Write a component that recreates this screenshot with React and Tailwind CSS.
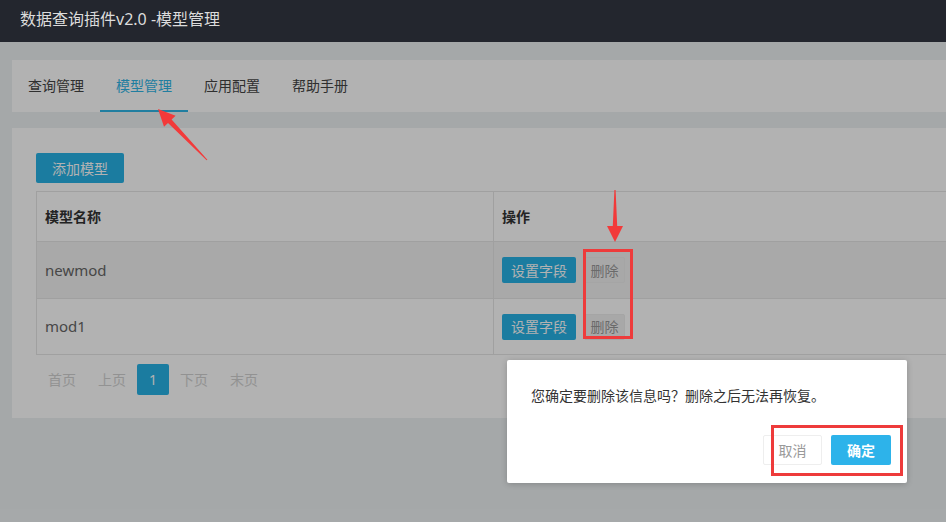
import React from "react";

const tabs = ["查询管理", "模型管理", "应用配置", "帮助手册"];
const rows = ["newmod", "mod1"];

export default function App() {
  return (
    <div className="relative w-[946px] h-[522px] overflow-hidden flex flex-col font-['Noto_Sans','Noto_Sans_CJK_SC',sans-serif] text-[14px]">
      {/* Header */}
      <div className="h-[42px] shrink-0 bg-[#23262e] flex items-center px-5 pb-[4px]">
        <span className="text-[16px] text-[#dcdcdc]">数据查询插件v2.0 -模型管理</span>
      </div>

      {/* Content */}
      <div className="relative flex-1 bg-[#edf1f3] pt-[18px] pl-[12px]">
        {/* Tabs panel */}
        <div className="w-[960px] h-[52px] bg-white flex">
          {tabs.map((t, i) => (
            <div
              key={t}
              className={
                i === 1
                  ? "px-4 h-full flex items-center border-b-2 border-[#2fb5e6] text-[#2fb5e6] pt-[1px]"
                  : "px-4 h-full flex items-center text-[#444] border-b-2 border-transparent pt-[1px]"
              }
            >
              {t}
            </div>
          ))}
        </div>

        {/* Main panel */}
        <div className="mt-[16px] w-[960px] h-[290px] bg-white pl-[24px] pt-[25px]">
          <button className="w-[88px] h-[30px] bg-[#28b2e6] text-white rounded-[2px] text-[14px]">
            添加模型
          </button>
          <div className="mt-[8px] w-[940px] border border-[#e6e6e6]">
            <div className="flex h-[50px] border-b border-[#e6e6e6] items-center">
              <div className="w-[457px] h-full border-r border-[#e6e6e6] flex items-center pl-[8px] font-bold text-[#333]">
                模型名称
              </div>
              <div className="flex-1 pl-[8px] font-bold text-[#333]">操作</div>
            </div>
            {rows.map((r, i) => (
              <div
                key={r}
                className={
                  i === 0
                    ? "flex h-[57px] border-b border-[#e6e6e6] bg-[#f3f3f3]"
                    : "flex h-[55px]"
                }
              >
                <div className="w-[457px] h-full border-r border-[#e6e6e6] flex items-center pl-[8px] text-[15px] text-[#666]">
                  {r}
                </div>
                <div className="flex-1 flex items-center pl-[8px] gap-[8px]">
                  <button className="h-[26px] w-[74px] bg-[#28b2e6] text-white text-[14px] rounded-[2px]">
                    设置字段
                  </button>
                  <button className="h-[26px] w-[41px] bg-[#f1f1f1] border border-[#ececec] text-[#999] text-[14px] rounded-[2px]">
                    删除
                  </button>
                </div>
              </div>
            ))}
          </div>
          {/* Pagination */}
          <div className="mt-[9px] ml-px flex items-center h-[31px] text-[14px] text-[#d2d2d2]">
            <span className="px-[11px]">首页</span>
            <span className="px-[11px]">上页</span>
            <span className="w-[32px] h-[31px] bg-[#28b2e6] text-white rounded-[2px] flex items-center justify-center">1</span>
            <span className="px-[11px]">下页</span>
            <span className="px-[11px]">末页</span>
          </div>
        </div>

        {/* Shade */}
        <div className="absolute inset-0 bg-black/30"></div>
      </div>

      {/* Dialog */}
      <div className="absolute left-[507px] top-[360px] w-[400px] h-[123px] bg-white rounded-[2px] shadow-[0_1px_6px_rgba(0,0,0,0.2)] flex flex-col">
        <div className="pl-[24px] pt-[26px] text-[14px] leading-[20px] text-[#333]">
          您确定要删除该信息吗？删除之后无法再恢复。
        </div>
        <div className="mt-auto mb-[18px] mr-[16px] flex justify-end gap-[9px]">
          <button className="w-[59px] h-[30px] border border-[#eeeeee] text-[#999] rounded-[2px] text-[14px] bg-white">
            取消
          </button>
          <button className="w-[60px] h-[30px] bg-[#2db3ea] text-white rounded-[2px] text-[14px] font-semibold">
            确定
          </button>
        </div>
      </div>

      {/* Annotations */}
      <div className="absolute left-[583px] top-[249px] w-[50px] h-[90px] border-[3px] border-[#ee3b3b]"></div>
      <div className="absolute left-[771px] top-[425px] w-[132px] h-[51px] border-[3px] border-[#ee3b3b]"></div>
      <svg className="absolute left-0 top-0" width="946" height="522" viewBox="0 0 946 522">
        <polygon
          points="207.4,159.7 171.6,119.6 175.6,115.8 158,109 164,126.8 168,123 206.6,160.3"
          fill="#f23a3a"
        />
        <polygon
          points="614.4,190 615.6,190 617.2,226 623,226 615,242 607,226 612.8,226"
          fill="#f23a3a"
        />
      </svg>
    </div>
  );
}
